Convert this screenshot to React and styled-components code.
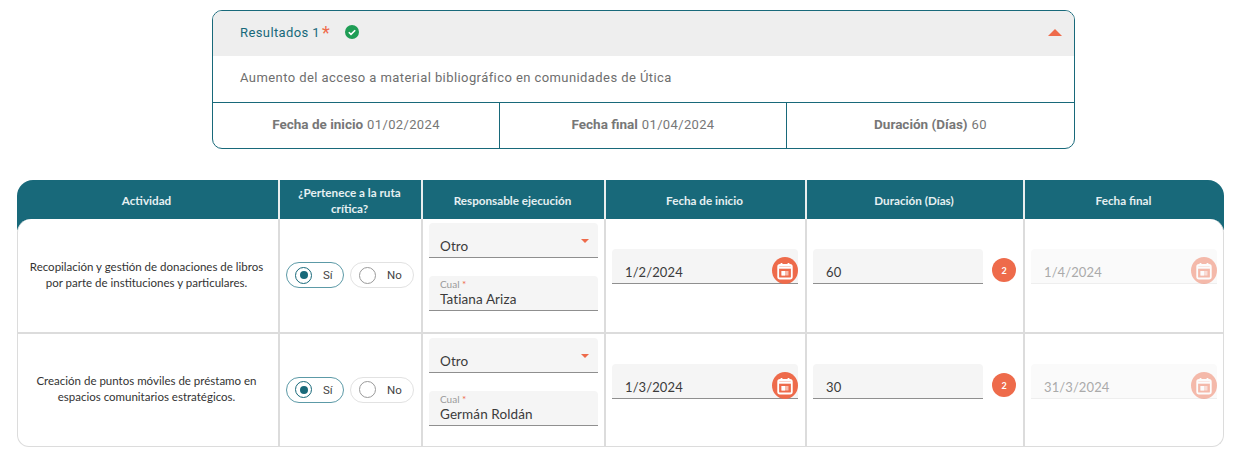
import styled, { createGlobalStyle } from "styled-components";

const GlobalStyle = createGlobalStyle`
    body {
        margin: 0;
        background: #fff;
        font-family: Roboto, "Liberation Sans", sans-serif;
    }
`;

const TEAL = "#18697a";
const CORAL = "#ee6b4b";
const LINE = "#dcdcdc";

const Page = styled.div`
    padding: 10px 14px 0 17px;
`;
const ResultCard = styled.section`
    width: 861px;
    margin: 0 0 31px 195px;
    border: 1px solid ${TEAL};
    border-radius: 10px;
    overflow: hidden;
`;
const ResultHeader = styled.div`
    height: 45px;
    box-sizing: border-box;
    background: #eee;
    display: flex;
    align-items: center;
    padding: 0 12px 3px 27px;
`;
const ResultTitle = styled.span`
    font-size: 13px;
    letter-spacing: 0.4px;
    color: ${TEAL};
`;
const Star = styled.span`
    color: ${CORAL};
    font-size: 18px;
    line-height: 13px;
    margin-left: 2px;
`;
const CheckBadge = styled.svg`
    width: 14px;
    height: 14px;
    margin-left: 15px;
`;
const CaretUp = styled.span`
    margin-left: auto;
    width: 0;
    height: 0;
    border-left: 7px solid transparent;
    border-right: 7px solid transparent;
    border-bottom: 7px solid ${CORAL};
`;
const ResultText = styled.div`
    height: 46px;
    box-sizing: border-box;
    display: flex;
    align-items: center;
    padding: 0 0 3px 27px;
    font-size: 13px;
    letter-spacing: 0.42px;
    color: #6e6e6e;
`;
const ResultDates = styled.div`
    display: grid;
    grid-template-columns: 286px 287px 1fr;
    height: 45px;
    border-top: 1px solid ${TEAL};
`;
const ResultDate = styled.div`
    display: flex;
    align-items: center;
    justify-content: center;
    gap: 4px;
    padding-bottom: 3px;
    font-size: 13px;
    letter-spacing: 0.35px;
    color: #777;
    border-left: ${(p) => (p.$first ? "none" : `1px solid ${TEAL}`)};
    b {
        font-weight: 700;
        font-size: 13.5px;
        letter-spacing: 0;
    }
`;

const Table = styled.section`
    width: 1207px;
    border-radius: 16px 16px 12px 12px;
    background: linear-gradient(${TEAL} 50px, #fff 50px);
`;
const HeaderRow = styled.div`
    display: grid;
    grid-template-columns: 261px 143px 183px 201px 218px 1fr;
    height: 39px;
`;
const HeaderCell = styled.div`
    display: flex;
    align-items: center;
    justify-content: center;
    text-align: center;
    padding: 0 15px 0 13px;
    font-family: Lato, sans-serif;
    font-weight: 700;
    font-size: 11.7px;
    line-height: 16px;
    color: #e6f0f2;
    border-left: ${(p) => (p.$first ? "none" : "2px solid #e8eeee")};
`;
const TableBody = styled.div`
    background: #fff;
    border: 1px solid ${LINE};
    border-top: none;
    border-radius: 14px 14px 12px 12px;
    overflow: hidden;
`;
const Row = styled.div`
    display: grid;
    grid-template-columns: 260px 143px 183px 201px 218px 1fr;
    box-sizing: border-box;
    height: ${(p) => p.$height}px;
    border-bottom: ${(p) => (p.$last ? "none" : `2px solid ${LINE}`)};
`;
const Cell = styled.div`
    display: flex;
    border-left: ${(p) => (p.$first ? "none" : `2px solid ${LINE}`)};
    min-width: 0;
`;
const ActivityCell = styled(Cell)`
    align-items: center;
    justify-content: center;
    text-align: center;
    padding: 0 10px 2px 7px;
    font-family: Lato, sans-serif;
    font-size: 11.5px;
    line-height: 16px;
    color: #333;
`;
const RadioCell = styled(Cell)`
    align-items: center;
    gap: 6px;
    padding: 0 0 1px 6px;
`;
const RadioPill = styled.label`
    display: flex;
    align-items: center;
    box-sizing: border-box;
    height: 26px;
    width: ${(p) => p.$width}px;
    padding-left: 8px;
    gap: 11px;
    border-radius: 13px;
    border: ${(p) => (p.$on ? "1.5px solid #5c9aa7" : "1.5px solid #e2e2e2")};
    font-size: 11.5px;
    color: #444;
`;
const RadioDot = styled.span`
    box-sizing: border-box;
    width: 17px;
    height: 17px;
    border-radius: 50%;
    display: flex;
    align-items: center;
    justify-content: center;
    border: 1.5px solid ${(p) => (p.$on ? TEAL : "#9a9a9a")};
    &::after {
        content: "";
        width: 8px;
        height: 8px;
        border-radius: 50%;
        background: ${(p) => (p.$on ? TEAL : "transparent")};
    }
`;
const Field = styled.div`
    position: relative;
    min-width: 0;
    box-sizing: border-box;
    height: 35px;
    padding: 0 12px 3px 11px;
    display: flex;
    flex-direction: column;
    justify-content: flex-end;
    background: ${(p) => (p.$disabled ? "#fafafa" : "#f5f5f5")};
    border-radius: 4px 4px 0 0;
    border-bottom: 1px solid ${(p) => (p.$disabled ? "#eee" : "#8f8f8f")};
    font-family: Lato, sans-serif;
    font-size: 13.5px;
    line-height: 16px;
    letter-spacing: 0.1px;
    color: ${(p) => (p.$disabled ? "#aaa" : "#3b3b3b")};
`;
const StackCell = styled(Cell)`
    flex-direction: column;
    gap: 18px;
    padding: 4px 6px 0;
`;
const FieldCell = styled(Cell)`
    align-items: flex-start;
    padding: 30px ${(p) => p.$right || 7}px 0 6px;
    gap: 9px;
    ${Field} {
        flex: 1;
        padding-left: 13px;
        font-size: 13px;
    }
`;
const FieldLabel = styled.span`
    font-size: 10px;
    line-height: 11px;
    margin-bottom: 1px;
    letter-spacing: 0;
    color: #9a9a9a;
    i {
        color: ${CORAL};
        font-style: normal;
    }
`;
const SelectCaret = styled.span`
    position: absolute;
    right: 9px;
    top: 16px;
    width: 0;
    height: 0;
    border-left: 4px solid transparent;
    border-right: 4px solid transparent;
    border-top: 4px solid ${CORAL};
`;
const CalendarButton = styled.span`
    position: absolute;
    right: 0;
    bottom: -1px;
    width: 26px;
    height: 27px;
    border-radius: 50%;
    background: ${CORAL};
    opacity: ${(p) => (p.$disabled ? 0.45 : 1)};
    display: flex;
    align-items: center;
    justify-content: center;
`;
const CountBadge = styled.span`
    flex: none;
    width: 24px;
    height: 24px;
    margin-top: 9px;
    border-radius: 50%;
    background: ${CORAL};
    color: #fff;
    font-family: Lato, sans-serif;
    font-size: 9px;
    font-weight: 700;
    display: flex;
    align-items: center;
    justify-content: center;
`;

function CalendarIcon() {
    return (
        <svg width="16" height="18" viewBox="0 0 16 18" fill="none">
            <rect x="1.2" y="3" width="13.6" height="13.5" rx="1.8" stroke="#fff" strokeWidth="1.8" />
            <path d="M1.5 5.5h13" stroke="#fff" strokeWidth="2.4" />
            <path d="M4.5 1v3M11.5 1v3" stroke="#fff" strokeWidth="1.8" />
            <rect x="4.5" y="9" width="7" height="4.5" fill="#fff" fillOpacity="0.55" />
            <rect x="4.5" y="9" width="3.5" height="4.5" fill="#fff" />
        </svg>
    );
}

function DateField({ value, disabled }) {
    return (
        <Field $disabled={disabled}>
            {value}
            <CalendarButton $disabled={disabled}>
                <CalendarIcon />
            </CalendarButton>
        </Field>
    );
}

const headers = [
    "Actividad",
    "¿Pertenece a la ruta crítica?",
    "Responsable ejecución",
    "Fecha de inicio",
    "Duración (Días)",
    "Fecha final",
];

const rows = [
    {
        activity: "Recopilación y gestión de donaciones de libros por parte de instituciones y particulares.",
        person: "Tatiana Ariza",
        start: "1/2/2024",
        days: "60",
        end: "1/4/2024",
        height: 115,
    },
    {
        activity: "Creación de puntos móviles de préstamo en espacios comunitarios estratégicos.",
        person: "Germán Roldán",
        start: "1/3/2024",
        days: "30",
        end: "31/3/2024",
        height: 112,
        last: true,
    },
];

export default function App() {
    return (
        <Page>
            <GlobalStyle />
            <ResultCard>
                <ResultHeader>
                    <ResultTitle>Resultados 1</ResultTitle>
                    <Star>*</Star>
                    <CheckBadge viewBox="0 0 14 14">
                        <circle cx="7" cy="7" r="7" fill="#1f9d55" />
                        <path d="M3.8 7.2l2.2 2.2 4.2-4.2" fill="none" stroke="#fff" strokeWidth="1.6" />
                    </CheckBadge>
                    <CaretUp />
                </ResultHeader>
                <ResultText>Aumento del acceso a material bibliográfico en comunidades de Útica</ResultText>
                <ResultDates>
                    <ResultDate $first><b>Fecha de inicio</b> 01/02/2024</ResultDate>
                    <ResultDate><b>Fecha final</b> 01/04/2024</ResultDate>
                    <ResultDate><b>Duración (Días)</b> 60</ResultDate>
                </ResultDates>
            </ResultCard>
            <Table>
                <HeaderRow>
                    {headers.map((h, i) => (
                        <HeaderCell key={h} $first={i === 0}>{h}</HeaderCell>
                    ))}
                </HeaderRow>
                <TableBody>
                    {rows.map((r) => (
                        <Row key={r.person} $height={r.height} $last={r.last}>
                            <ActivityCell $first>{r.activity}</ActivityCell>
                            <RadioCell>
                                <RadioPill $on $width={58}><RadioDot $on />Sí</RadioPill>
                                <RadioPill $width={64}><RadioDot />No</RadioPill>
                            </RadioCell>
                            <StackCell>
                                <Field>
                                    Otro
                                    <SelectCaret />
                                </Field>
                                <Field>
                                    <FieldLabel>Cual <i>*</i></FieldLabel>
                                    {r.person}
                                </Field>
                            </StackCell>
                            <FieldCell>
                                <DateField value={r.start} />
                            </FieldCell>
                            <FieldCell>
                                <Field>{r.days}</Field>
                                <CountBadge>2</CountBadge>
                            </FieldCell>
                            <FieldCell $right={6}>
                                <DateField value={r.end} disabled />
                            </FieldCell>
                        </Row>
                    ))}
                </TableBody>
            </Table>
        </Page>
    );
}
